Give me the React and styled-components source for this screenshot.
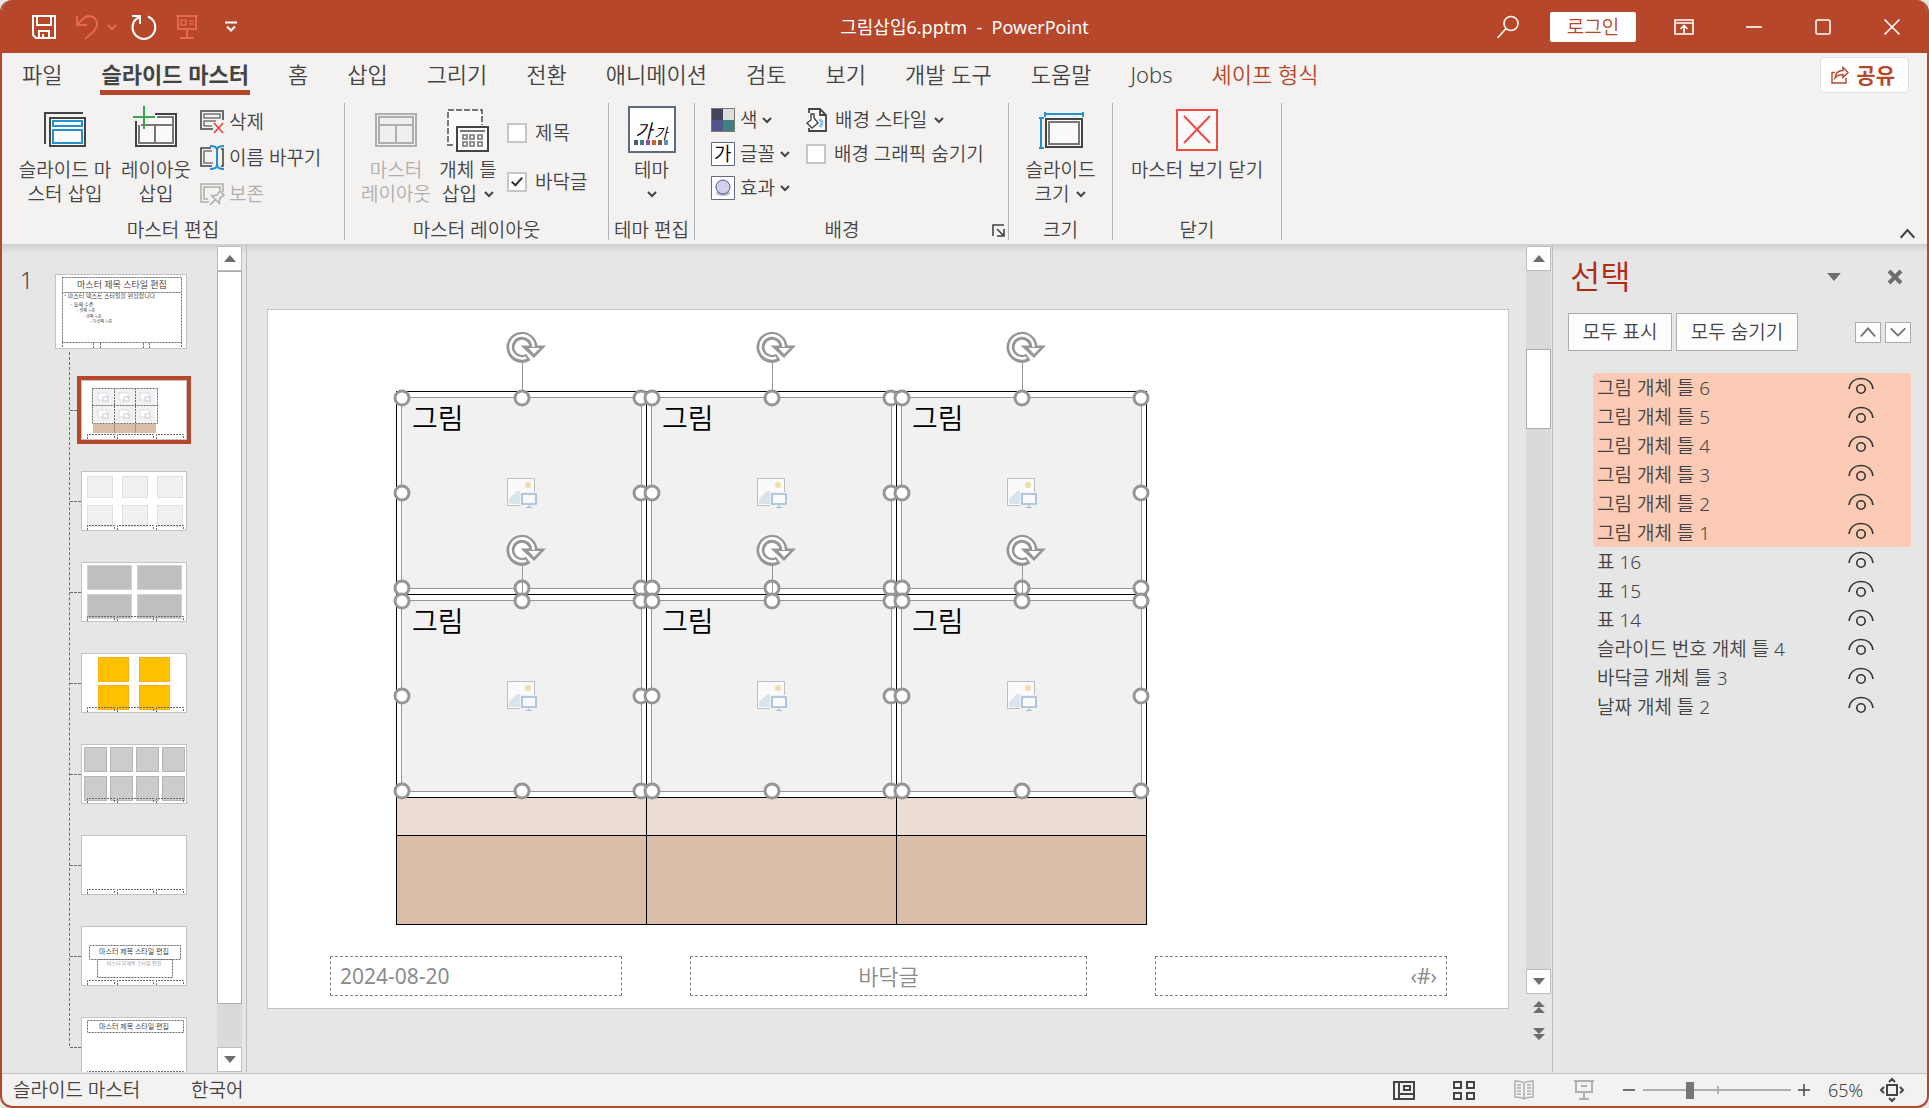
import React, { useState } from "react";
import styled, { createGlobalStyle } from "styled-components";

const GlobalStyle = createGlobalStyle`
    *, *::before, *::after {
        box-sizing: border-box;
    }
    body {
        margin: 0;
        background: #e4e6e8;
    }
    body, button, input {
        font-family: "Noto Sans", "Noto Sans CJK KR", sans-serif;
        font-weight: 350;
        color: #444444;
    }
    svg {
        display: block;
        flex: none;
        overflow: visible;
    }
`;

const Window = styled.div`
    display: flex;
    flex-direction: column;
    height: 100vh;
    overflow: hidden;
    background: #f3f2f1;
    border: 2px solid #b7472a;
    border-top: none;
    border-radius: 12px;
`;

const TitleBar = styled.header`
    display: grid;
    grid-template-columns: 1fr auto 1fr;
    align-items: center;
    flex: none;
    height: 53px;
    background: #b7472a;
    color: #ffffff;
`;

const QuickAccess = styled.div`
    display: flex;
    align-items: center;
    padding-left: 29px;
`;

const PlainButton = styled.button`
    display: flex;
    align-items: center;
    justify-content: center;
    flex: none;
    width: ${({ $width }) => $width || 24}px;
    height: ${({ $height }) => $height || 30}px;
    margin-right: ${({ $gap }) => $gap || 0}px;
    padding: 0;
    border: none;
    background: none;
    color: inherit;
    cursor: pointer;
`;

const WindowTitle = styled.h1`
    margin: 0;
    font-size: 18px;
    line-height: 24px;
    font-weight: 400;
    white-space: pre;
`;

const WindowControls = styled.div`
    display: flex;
    align-items: center;
    justify-content: flex-end;
`;

const LoginButton = styled.button`
    width: 86px;
    height: 30px;
    margin: 0 13px 0 27px;
    padding: 0;
    border: none;
    border-radius: 2px;
    background: #ffffff;
    color: #b7472a;
    font-size: 19px;
    line-height: 30px;
    cursor: pointer;
`;

const TabBar = styled.nav`
    display: flex;
    align-items: flex-start;
    flex: none;
    height: 45px;
    padding: 4px 18px 0 19px;
`;

const TabList = styled.div`
    display: flex;
    flex: 1;
    gap: 37px;
`;

const Tab = styled.button`
    height: 38px;
    padding: 1px 1px 0;
    border: none;
    border-bottom: 5px solid ${({ $active }) => ($active ? "#b7472a" : "transparent")};
    background: none;
    color: ${({ $accent }) => ($accent ? "#b7472a" : "#444444")};
    font-size: 22px;
    line-height: 32px;
    font-weight: ${({ $active }) => ($active ? 700 : 350)};
    white-space: nowrap;
    cursor: pointer;
`;

const ShareButton = styled.button`
    display: flex;
    align-items: center;
    gap: 7px;
    height: 36px;
    padding: 0 13px 0 10px;
    border: 1px solid #e1dfdd;
    border-radius: 4px;
    background: #ffffff;
    color: #b7472a;
    font-size: 21px;
    line-height: 32px;
    font-weight: 700;
    cursor: pointer;
`;

const Ribbon = styled.section`
    display: flex;
    flex: none;
    height: 146px;
    padding: 5px 0 4px;
`;

const Group = styled.section`
    display: flex;
    flex-direction: column;
    flex: none;
    width: ${({ $width }) => $width}px;
    border-right: 1px solid #b5b3b1;
`;

const GroupBody = styled.div`
    display: flex;
    flex: 1;
    min-height: 0;
    justify-content: ${({ $center }) => ($center ? "center" : "flex-start")};
    padding-left: ${({ $left }) => $left || 0}px;
`;

const GroupFooter = styled.div`
    display: flex;
    align-items: center;
    flex: none;
    height: 20px;
`;

const GroupName = styled.h2`
    flex: 1;
    margin: 0;
    font-size: 19px;
    line-height: 20px;
    font-weight: 350;
    text-align: center;
    white-space: nowrap;
`;

const BigButton = styled.button`
    display: flex;
    flex-direction: column;
    align-items: center;
    flex: none;
    width: ${({ $width }) => $width}px;
    padding: 0;
    border: none;
    background: none;
    color: ${({ disabled }) => (disabled ? "#b1afad" : "#444444")};
    font-size: 19px;
    line-height: 24px;
    white-space: nowrap;
    cursor: pointer;
    > svg {
        margin-bottom: 5px;
    }
`;

const Line = styled.span`
    display: flex;
    align-items: center;
    justify-content: center;
    gap: 7px;
    min-height: 24px;
`;

const Column = styled.div`
    display: flex;
    flex-direction: column;
    align-items: flex-start;
    padding-top: ${({ $top }) => $top || 0}px;
    margin-left: ${({ $left }) => $left || 0}px;
    gap: ${({ $gap }) => $gap || 0}px;
`;

const SmallButton = styled.button`
    display: flex;
    align-items: center;
    gap: ${({ $gap }) => $gap || 5}px;
    height: ${({ $height }) => $height || 34}px;
    padding: 0;
    border: none;
    background: none;
    color: ${({ disabled }) => (disabled ? "#b1afad" : "#444444")};
    font-size: 19px;
    line-height: 24px;
    white-space: nowrap;
    cursor: pointer;
`;

const CheckLabel = styled.label`
    display: flex;
    align-items: center;
    gap: 8px;
    height: ${({ $height }) => $height || 34}px;
    font-size: 19px;
    line-height: 24px;
    white-space: nowrap;
`;

const CheckBox = styled.input.attrs({ type: "checkbox" })`
    appearance: none;
    display: flex;
    justify-content: center;
    width: 20px;
    height: 20px;
    margin: 0;
    border: 2px solid #c6c6c6;
    background: #ffffff;
    &:checked::after {
        content: "";
        width: 6px;
        height: 11px;
        margin-top: 1px;
        border: solid #333333;
        border-width: 0 2px 2px 0;
        transform: rotate(42deg);
    }
`;

const RibbonEnd = styled.div`
    display: flex;
    flex: 1;
    align-items: flex-end;
    justify-content: flex-end;
    padding-right: 11px;
`;

const Workspace = styled.main`
    display: flex;
    flex: 1;
    min-height: 0;
    padding-bottom: 1px;
    background: linear-gradient(#cfcfcf, #e6e6e6 9px);
`;

const ThumbPane = styled.aside`
    display: flex;
    flex: none;
    width: 245px;
    padding-top: 2px;
    border-right: 1px solid #bcbcbc;
`;

const ThumbScroll = styled.div`
    display: flex;
    flex: 1;
    overflow: hidden;
    padding-top: 28px;
`;

const MasterNumber = styled.span`
    flex: none;
    width: 53px;
    padding-left: 18px;
    font-size: 23px;
    line-height: 12px;
`;

const Thumbs = styled.div`
    display: flex;
    flex-direction: column;
    flex: none;
`;

const ThumbButton = styled.button`
    flex: none;
    padding: 0;
    border: 1px solid #c3c3c3;
    background: #ffffff;
    outline: ${({ $selected }) => ($selected ? "4px solid #b7472a" : "none")};
    cursor: pointer;
`;

const LayoutThumbs = styled.div`
    display: flex;
    flex-direction: column;
    margin: 3px 0 0 14px;
    border-left: 1px dashed #6b6b6b;
    height: 694px;
    overflow: visible;
`;

const LayoutRow = styled.div`
    display: flex;
    align-items: center;
    flex: none;
    height: 60px;
    margin-top: ${({ $first }) => ($first ? 28 : 31)}px;
    &::before {
        content: "";
        width: 11px;
        border-top: 1px dashed #6b6b6b;
    }
`;

const ScrollBar = styled.div`
    display: flex;
    flex-direction: column;
    flex: none;
    width: 25px;
    margin-right: ${({ $gap }) => $gap || 0}px;
    background: #dadada;
`;

const ScrollButton = styled.button`
    display: flex;
    align-items: center;
    justify-content: center;
    flex: none;
    height: 25px;
    padding: 0;
    border: 1px solid #bcbcbc;
    background: #ffffff;
`;

const ScrollTrack = styled.div`
    flex: ${({ $grow }) => $grow};
`;

const ScrollThumb = styled.div`
    flex: ${({ $grow }) => $grow};
    border: 1px solid #ababab;
    background: #ffffff;
`;

const SlideJump = styled.div`
    display: flex;
    flex-direction: column;
    align-items: center;
    gap: 1px;
    flex: none;
    height: 78px;
    background: #e6e6e6;
`;

const Editor = styled.section`
    display: flex;
    flex: 1;
    min-width: 0;
    padding-top: 2px;
`;

const Stage = styled.div`
    display: flex;
    align-items: center;
    justify-content: center;
    flex: 1;
    min-width: 0;
    overflow: hidden;
    padding-left: 3px;
`;

const Slide = styled.div`
    flex: none;
    width: 1242px;
    height: 700px;
    padding: 81px 61px 0 62px;
    border: 1px solid #c3c3c3;
    background: #ffffff;
`;

const Board = styled.div`
    display: grid;
    grid-template-columns: repeat(3, 250px);
    grid-template-rows: 203px 203px 38px 89px;
    width: 751px;
    margin: 0 0 31px 66px;
    border-top: 1px solid #000000;
    border-left: 1px solid #000000;
`;

const BoardCell = styled.div`
    padding: 5px 4px;
    border-right: 1px solid #000000;
    border-bottom: 1px solid #000000;
    background: ${({ $fill }) => $fill || "#ffffff"};
`;

const Placeholder = styled.div`
    position: relative;
    display: flex;
    align-items: center;
    justify-content: center;
    height: 100%;
    border: 1px solid #969696;
    background: #f1f1f1;
`;

const PlaceholderName = styled.span`
    position: absolute;
    top: 4px;
    left: 10px;
    color: #000000;
    font-size: 28px;
    line-height: 32px;
`;

const Handle = styled.span`
    position: absolute;
    left: ${({ $x }) => $x}%;
    top: ${({ $y }) => $y}%;
    width: 17px;
    height: 17px;
    border: 3px solid #969696;
    border-radius: 50%;
    background: #ffffff;
    transform: translate(-50%, -50%);
`;

const Rotator = styled.span`
    position: absolute;
    left: 50%;
    bottom: 100%;
    width: 48px;
    height: 68px;
    margin-left: -24px;
`;

const FooterRow = styled.div`
    display: grid;
    grid-template-columns: 292px 397px 292px;
    justify-content: space-between;
`;

const FooterBox = styled.div`
    height: 40px;
    padding: 0 9px;
    border: 1px dashed #7f7f7f;
    color: #8b8b8b;
    font-size: ${({ $size }) => $size || 21}px;
    line-height: 38px;
    font-weight: ${({ $align }) => ($align === "center" ? 350 : 400)};
    text-align: ${({ $align }) => $align || "left"};
`;

const SelectionPane = styled.aside`
    flex: none;
    width: 375px;
    padding: 14px 16px 0 15px;
    border-left: 1px solid #bcbcbc;
`;

const PaneHeader = styled.div`
    display: flex;
    align-items: center;
    height: 38px;
    padding-left: 2px;
`;

const PaneTitle = styled.h2`
    flex: 1;
    margin: 0;
    color: #b02a15;
    font-size: 33px;
    line-height: 38px;
    font-weight: 350;
`;

const PaneTools = styled.div`
    display: flex;
    align-items: center;
    gap: 4px;
    margin: 17px 0 22px;
`;

const PaneButton = styled.button`
    height: 38px;
    width: ${({ $width }) => $width}px;
    padding: 0;
    border: 1px solid #ababab;
    background: #fdfdfd;
    font-size: 19px;
    line-height: 36px;
    white-space: nowrap;
    cursor: pointer;
`;

const OrderButton = styled.button`
    display: flex;
    align-items: center;
    justify-content: center;
    width: 26px;
    height: 21px;
    margin-left: ${({ $push }) => ($push ? "auto" : 0)};
    padding: 0;
    border: 1px solid #ababab;
    background: #fdfdfd;
`;

const ObjectList = styled.ul`
    margin: 0 0 0 25px;
    padding: 0;
    list-style: none;
`;

const ObjectRow = styled.li`
    display: flex;
    align-items: flex-start;
    justify-content: space-between;
    height: 29px;
    padding: 0 38px 0 4px;
    background: ${({ $selected }) => ($selected ? "#fbcbb5" : "transparent")};
    font-size: 19px;
    line-height: 31px;
`;

const StatusBar = styled.footer`
    display: flex;
    align-items: center;
    flex: none;
    height: 33px;
    padding: 0 14px 0 11px;
    border-top: 1px solid #c3c3c3;
    font-size: 19px;
    line-height: 32px;
`;

const StatusText = styled.span`
    width: ${({ $width }) => $width}px;
    white-space: nowrap;
`;

const ViewButtons = styled.div`
    display: flex;
    gap: 36px;
    margin-left: auto;
`;

const ZoomSlider = styled.input.attrs({ type: "range" })`
    appearance: none;
    width: 148px;
    height: 18px;
    margin: 0 6px 0 7px;
    background:
        linear-gradient(#b1afad, #b1afad) 74px center / 2px 8px no-repeat,
        linear-gradient(#b1afad, #b1afad) center / 100% 2px no-repeat;
    &::-webkit-slider-thumb {
        appearance: none;
        width: 8px;
        height: 17px;
        background: #777777;
    }
`;

const ZoomValue = styled.output`
    width: 60px;
    padding-left: 17px;
    font-size: 18px;
`;

const Chevron = ({ size = 10, up, color = "currentColor", weight = 2 }) => (
    <svg width={size} height={size} viewBox="0 0 10 10" fill="none" stroke={color} strokeWidth={weight}>
        <path d={up ? "M1 7.500 5 3l4 4.500" : "M1 3 5 7 9 3"} />
    </svg>
);

const Triangle = ({ up, width = 12, height = 7 }) => (
    <svg width={width} height={height} viewBox="0 0 12 7" fill="#6d6d6d">
        <path d={up ? "M0 7h12L6 0z" : "M0 0h12L6 7z"} />
    </svg>
);

const SaveIcon = () => (
    <svg width="26" height="26" viewBox="0 0 26 26" fill="none" stroke="#fff" strokeWidth="2">
        <path d="M2 2h22v22H5l-3-3z" />
        <path d="M6 2v9h14V2M8 24v-7h10v7M12 20v4" />
    </svg>
);

const UndoIcon = () => (
    <svg width="24" height="26" viewBox="0 0 24 26" fill="none" stroke="#e8694a" strokeWidth="2">
        <path d="M2 2v9h10M2 11 9 4c5-4 13-1 13 6 0 4-2 6-4 8l-8 7" />
    </svg>
);

const RedoIcon = () => (
    <svg width="26" height="26" viewBox="0 0 26 26" fill="none" stroke="#fff" strokeWidth="2">
        <path d="M1 2h8v8M8.500 3C4 5 1.500 9 1.500 13.500a11.300 11.300 0 0 0 22.800 0c0-5-3-9-7.300-11" />
    </svg>
);

const PresentIcon = () => (
    <svg width="24" height="26" viewBox="0 0 24 26" fill="none" stroke="#e8694a" strokeWidth="2">
        <path d="M1 2h22M3 2v13h18V2M12 15v9M5 24h14" />
        <path d="M6 6h5v5H6zM14 7h5M14 10h5" strokeWidth="1.500" />
    </svg>
);

const CustomizeIcon = () => (
    <svg width="12" height="12" viewBox="0 0 12 12" fill="none" stroke="#fff" strokeWidth="2">
        <path d="M0 1.500h12M2 5.500l4 4 4-4" />
    </svg>
);

const SearchIcon = () => (
    <svg width="24" height="24" viewBox="0 0 24 24" fill="none" stroke="#fff" strokeWidth="1.600">
        <circle cx="15" cy="8.500" r="7" />
        <path d="M10 13.500 1.500 23" />
    </svg>
);

const RibbonModeIcon = () => (
    <svg width="20" height="16" viewBox="0 0 20 16" fill="none" stroke="#fff" strokeWidth="1.600">
        <path d="M1 1h18v14H1zM1 4h18M10 14V7M6.500 10 10 6.500l3.500 3.500" />
    </svg>
);

const MinimizeIcon = () => (
    <svg width="16" height="16" viewBox="0 0 16 16" stroke="#fff" strokeWidth="1.600">
        <path d="M0 8h16" />
    </svg>
);

const MaximizeIcon = () => (
    <svg width="16" height="16" viewBox="0 0 16 16" fill="none" stroke="#fff" strokeWidth="1.600">
        <rect x="1" y="1" width="14" height="14" rx="1.500" />
    </svg>
);

const CloseIcon = () => (
    <svg width="16" height="16" viewBox="0 0 16 16" stroke="#fff" strokeWidth="1.600">
        <path d="M.5.5l15 15M15.500.5l-15 15" />
    </svg>
);

const ShareIcon = () => (
    <svg width="18" height="18" viewBox="0 0 18 18" fill="none" stroke="#b7472a" strokeWidth="1.400">
        <path d="M4 6.500H1V17h14v-5" />
        <path d="M4 12c.5-5 3-7.500 8-7.500V1.500L17 6.500l-5 5V8.500C8 8.500 6 9.500 4 12z" />
    </svg>
);

const InsertMasterIcon = () => (
    <svg width="46" height="50" viewBox="0 0 46 50" fill="none">
        <path d="M3 41V10h38" stroke="#444" strokeWidth="2" />
        <rect x="8" y="15" width="35" height="28" fill="#fafafa" stroke="#444" strokeWidth="2" />
        <path d="M11 18h29v5H11zM11 27h29v13H11z" stroke="#2490d0" strokeWidth="2" />
    </svg>
);

const InsertLayoutIcon = () => (
    <svg width="46" height="50" viewBox="0 0 46 50" fill="none">
        <path d="M4 22h12V12h27v31H4z" fill="#fafafa" />
        <path d="M3 18v25h40V11H22" stroke="#444" strokeWidth="2" />
        <path d="M24 14h16v26H6V22M8 22h32M22 22v18" stroke="#797774" strokeWidth="2" />
        <path d="M11 3v23M0 14h22" stroke="#3aa655" strokeWidth="2" />
    </svg>
);

const MasterLayoutIcon = () => (
    <svg width="46" height="50" viewBox="0 0 46 50" fill="none" stroke="#b1afad" strokeWidth="2">
        <rect x="3" y="11" width="40" height="32" fill="#f0efee" />
        <path d="M6 14h34v26H6zM6 22h34M23 22v18" />
    </svg>
);

const InsertPlaceholderIcon = () => (
    <svg width="46" height="50" viewBox="0 0 46 50" fill="none">
        <path d="M3 7h34v35H3z" fill="#fafafa" />
        <path d="M8 42H3V7h34v15" stroke="#797774" strokeWidth="2" strokeDasharray="6 2" />
        <rect x="12" y="24" width="31" height="24" fill="#fafafa" stroke="#444" strokeWidth="2" />
        <path d="M15 28h25" stroke="#797774" strokeWidth="2" />
        <path d="M18 32h4v4h-4zM25 32h4v4h-4zM33 32h4v4h-4zM18 39h4v4h-4zM25 39h4v4h-4zM33 39h4v4h-4z" stroke="#797774" strokeWidth="1.600" />
    </svg>
);

const DeleteIcon = () => (
    <svg width="24" height="24" viewBox="0 0 24 24" fill="none" stroke="#444" strokeWidth="1.600">
        <path d="M13 19H1V1h22v9" />
        <path d="M4 4h16v4H4zM4 16v-5h12M4 16h8" stroke="#797774" />
        <path d="m14 13 9 10M23 13l-9 10" stroke="#e8413c" />
    </svg>
);

const RenameIcon = () => (
    <svg width="24" height="26" viewBox="0 0 24 26" fill="none" stroke="#444" strokeWidth="1.600">
        <path d="M11 3H1v18h11M21 4h2v17h-2" />
        <path d="M12 6H4v12h9" stroke="#797774" />
        <path d="M10 1c5 0 7 1 7 4v15c0 3-2 4-7 4M24 1c-5 0-7 1-7 4v15c0 3 2 4 7 4" stroke="#2490d0" strokeWidth="2" />
    </svg>
);

const PreserveIcon = () => (
    <svg width="24" height="24" viewBox="0 0 24 24" fill="none" stroke="#b1afad" strokeWidth="1.600">
        <path d="M9 20H1V2h22v8M8 17H4V5h16v3" />
        <path d="m10 23 5-5M11 13l9 9M12 14l5-1 3-4 4 4-4 3-1 5" />
    </svg>
);

const ThemeIcon = () => (
    <svg width="48" height="50" viewBox="0 0 48 50">
        <rect x="1" y="4" width="46" height="45" fill="#fff" stroke="#5f6a82" strokeWidth="2" />
        <path d="M0 49h48" stroke="#5f6a82" strokeWidth="2" />
        <text x="7" y="35" fontSize="19" fill="#000" fontStyle="italic">가</text>
        <text x="26" y="36" fontSize="15" fill="#000" fontStyle="italic">가</text>
        {["#54548c", "#3f8183", "#a349a4", "#c8642a", "#8b5a3c", "#5b93b5"].map((color, i) => (
            <rect key={color} x={6 + i * 6} y="37" width="4" height="5" fill={color} />
        ))}
    </svg>
);

const ColorsIcon = () => (
    <svg width="24" height="24" viewBox="0 0 24 24">
        <path d="M0 0h12v12H0z" fill="#44445a" />
        <path d="M12 0h12v12H12z" fill="#dddddf" />
        <path d="M0 12h12v12H0z" fill="#54548c" />
        <path d="M12 12h12v12H12z" fill="#3f8183" />
        <path d="M.5.5h23v23H.5z" fill="none" stroke="#797774" />
    </svg>
);

const FontsIcon = () => (
    <svg width="24" height="24" viewBox="0 0 24 24">
        <path d="M.5.5h23v23H.5z" fill="#fff" stroke="#5f6a82" />
        <text x="3" y="19" fontSize="19" fill="#000">가</text>
    </svg>
);

const EffectsIcon = () => (
    <svg width="24" height="24" viewBox="0 0 24 24">
        <path d="M.5.5h23v23H.5z" fill="#fff" stroke="#5f6a82" />
        <ellipse cx="12" cy="17" rx="7" ry="3" fill="#bbbbc4" />
        <circle cx="12" cy="11" r="7" fill="#cfd0ea" stroke="#54548c" />
    </svg>
);

const BackgroundIcon = () => (
    <svg width="22" height="24" viewBox="0 0 22 24" fill="none" stroke="#444" strokeWidth="1.800">
        <path d="M3 5V1h11l6 6v16H3v-3" fill="#fafafa" />
        <path d="M14 1v6h6" />
        <path d="M13 12c3 0 4 3 1 7" stroke="#83c4ee" strokeWidth="3" />
        <path d="M5 6v6l-4 3 5 5 6-5-4-5V6z" fill="#fff" strokeWidth="1.400" />
    </svg>
);

const SlideSizeIcon = () => (
    <svg width="46" height="50" viewBox="0 0 46 50" fill="none">
        <rect x="8" y="16" width="36" height="28" fill="#fafafa" stroke="#444" strokeWidth="2" />
        <rect x="11" y="19" width="30" height="22" stroke="#797774" strokeWidth="2" />
        <path d="M7 11h38M7 9v5M45 9v5M3 15v30M1 15h5M1 45h5" stroke="#2490d0" strokeWidth="2" />
    </svg>
);

const CloseMasterIcon = () => (
    <svg width="46" height="50" viewBox="0 0 46 50" fill="none" stroke="#f04a45" strokeWidth="2">
        <rect x="3" y="7" width="40" height="40" fill="#fafafa" />
        <path d="m10 13 26 27M36 13 10 40" />
    </svg>
);

const LauncherIcon = () => (
    <svg width="13" height="13" viewBox="0 0 13 13" fill="none" stroke="#444" strokeWidth="1.600">
        <path d="M1 12V1h11M5 5l6 6M12 5v7H5" />
    </svg>
);

const EyeIcon = () => (
    <svg width="26" height="18" viewBox="0 0 26 18" fill="none" stroke="#333" strokeWidth="1.600">
        <path d="M1 11C2 4 7 .5 13 .5S24 4 25 11" />
        <circle cx="13" cy="11" r="4.200" />
    </svg>
);

const PictureIcon = () => (
    <svg width="30" height="30" viewBox="0 0 30 30" fill="none">
        <path d="M.5.5h27v27H.5z" fill="#fafafa" stroke="#bdbdbd" />
        <circle cx="21" cy="7" r="3" fill="#f1dcae" />
        <path d="M2 26v-5l8-8h3v13z" fill="#d8e4ee" />
        <path d="M13 14h17v16H13z" fill="#f1f1f1" />
        <path d="M15 16h14v10H15z" fill="#fafafa" stroke="#9dbbdb" strokeWidth="1.600" />
        <path d="M19 29.500h6M22 27v2" stroke="#9dbbdb" />
    </svg>
);

const RotateIcon = () => (
    <svg width="48" height="68" viewBox="0 0 48 68" fill="none">
        <path d="M24.500 32v28" stroke="#969696" />
        <circle cx="24" cy="17" r="13" fill="#fff" />
        <path d="M30.300 27A11.500 11.500 0 1 1 35.500 17" stroke="#969696" strokeWidth="8" />
        <path d="M22.500 15.500H48L36 28z" fill="#969696" />
        <path d="M28.300 27.600A11.500 11.500 0 1 1 35.500 17" stroke="#fff" strokeWidth="2.600" />
        <path d="M30.500 18H42l-6 6z" fill="#fff" />
    </svg>
);

const NormalViewIcon = () => (
    <svg width="24" height="20" viewBox="0 0 24 20" fill="none" stroke="#444" strokeWidth="2">
        <path d="M2 2h20v17H2zM7 2v17M7 14h15M12 6h6v4h-6z" />
    </svg>
);

const SorterIcon = () => (
    <svg width="24" height="20" viewBox="0 0 24 20" fill="none" stroke="#444" strokeWidth="2">
        <path d="M2 2h7v6H2zM15 2h7v6h-7zM2 13h7v6H2zM15 13h7v6h-7z" />
    </svg>
);

const ReadingIcon = () => (
    <svg width="24" height="20" viewBox="0 0 24 20" fill="none" stroke="#b1afad" strokeWidth="1.500">
        <path d="M12 3C9 1 6 1 3 1v16c3 0 6 0 9 2 3-2 6-2 9-2V1c-3 0-6 0-9 2zM12 3v16" />
        <path d="M5 5h4M5 8h4M5 11h4M5 14h4M15 5h4M15 8h4M15 11h4M15 14h4" />
    </svg>
);

const SlideShowIcon = () => (
    <svg width="24" height="22" viewBox="0 0 24 22" fill="none" stroke="#b1afad" strokeWidth="2">
        <path d="M2 2h20M4 2v11h16V2M12 13v7M7 20h10M9 7h6" />
    </svg>
);

const FitIcon = () => (
    <svg width="24" height="24" viewBox="0 0 24 24" fill="none" stroke="#444" strokeWidth="2">
        <path d="M7 7h10v10H7zM9 4l3-3 3 3M9 20l3 3 3-3M4 9l-3 3 3 3M20 9l3 3-3 3" />
    </svg>
);

const tabs = ["파일", "슬라이드 마스터", "홈", "삽입", "그리기", "전환", "애니메이션", "검토", "보기", "개발 도구", "도움말", "Jobs", "셰이프 형식"];

const objects = [
    { name: "그림 개체 틀 6", selected: true },
    { name: "그림 개체 틀 5", selected: true },
    { name: "그림 개체 틀 4", selected: true },
    { name: "그림 개체 틀 3", selected: true },
    { name: "그림 개체 틀 2", selected: true },
    { name: "그림 개체 틀 1", selected: true },
    { name: "표 16" },
    { name: "표 15" },
    { name: "표 14" },
    { name: "슬라이드 번호 개체 틀 4" },
    { name: "바닥글 개체 틀 3" },
    { name: "날짜 개체 틀 2" },
];

const handles = [[0, 0], [50, 0], [100, 0], [0, 50], [100, 50], [0, 100], [50, 100], [100, 100]];

const dashed = { fill: "none", stroke: "#6b6b6b", strokeWidth: 1, strokeDasharray: "2 1" };

const Boxes = ({ xs, ys, width, height, fill, stroke }) =>
    ys.flatMap((y) => xs.map((x) => (
        <rect key={`${x}-${y}`} x={x + 0.5} y={y + 0.5} width={width} height={height} fill={fill} stroke={stroke} />
    )));

// Each layout is drawn on a 104 x 58 sheet
const layouts = [
    {
        name: "그림 표",
        drawing: (
            <>
                <Boxes xs={[10, 31, 52]} ys={[7, 24]} width={21} height={17} fill="#f1f1f1" stroke="none" />
                <path d="M10.500 7.500h65v35h-65zM10.500 24.500h65M32.500 7v35M53.500 7v35" {...dashed} />
                {[16, 37, 58].flatMap((x) => [12, 29].map((y) => (
                    <g key={`${x}-${y}`}>
                        <rect x={x} y={y} width="9" height="7" fill="#fff" stroke="#ddd" />
                        <rect x={x + 5} y={y + 4} width="5" height="4" fill="#fff" stroke="#b9cfe6" />
                    </g>
                )))}
                <path d="M11 43h63v9H11z" fill="#d9bda9" />
                <path d="M32.500 43v9M53.500 43v9" stroke="#a88f7e" />
            </>
        ),
    },
    { name: "그림 6개", drawing: <Boxes xs={[5, 40, 75]} ys={[4, 33]} width={25} height={21} fill="#f1f1f1" stroke="#e0e0e0" /> },
    { name: "그림 4개", drawing: <Boxes xs={[5, 55]} ys={[2, 31]} width={44} height={24} fill="#bfbfbf" stroke="#d0d0d0" /> },
    { name: "노란 상자", drawing: <Boxes xs={[16, 57]} ys={[3, 31]} width={30} height={24} fill="#ffc000" stroke="#ffae1a" /> },
    { name: "그림 8개", drawing: <Boxes xs={[2, 28, 54, 80]} ys={[2, 31]} width={22} height={24} fill="#cccccc" stroke="#b5b5b5" /> },
    { name: "빈 화면", drawing: null },
    {
        name: "제목 슬라이드",
        drawing: (
            <>
                <path d="M7.500 18.500h91v14h-91zM15.500 32.500h75v18h-75z" {...dashed} />
                <text x="52" y="27" fontSize="7" textAnchor="middle" fill="#333">마스터 제목 스타일 편집</text>
                <text x="52" y="38" fontSize="5" textAnchor="middle" fill="#8b8b8b">마스터 부제목 스타일 편집</text>
            </>
        ),
    },
    {
        name: "제목만",
        drawing: (
            <>
                <path d="M5.500 2.500h96v12h-96z" {...dashed} />
                <text x="52" y="11" fontSize="7" textAnchor="middle" fill="#333">마스터 제목 스타일 편집</text>
            </>
        ),
    },
];

const MasterThumb = () => (
    <svg width="130" height="73" viewBox="0 0 130 73">
        <path d="M6.500 2.500h119v15h-119zM6.500 17.500v50h119v-50M6.500 67v6M37.500 73v-5M44.500 73v-5M87.500 73v-5M93.500 73v-5M125.500 67v6" {...dashed} />
        <text x="66" y="13" fontSize="9" textAnchor="middle" fill="#333">마스터 제목 스타일 편집</text>
        <g fill="#333">
            <text x="8" y="23" fontSize="6">• 마스터 텍스트 스타일을 편집합니다</text>
            <text x="14" y="31" fontSize="5">– 둘째 수준</text>
            <text x="21" y="37" fontSize="4">• 셋째 수준</text>
            <text x="27" y="43" fontSize="4">– 넷째 수준</text>
            <text x="34" y="48" fontSize="4">» 다섯째 수준</text>
        </g>
    </svg>
);

const LayoutThumb = ({ drawing }) => (
    <svg width="104" height="58" viewBox="0 0 104 58">
        {drawing}
        <path d="M5.500 58v-4.500h27V58M35.500 58v-4.500h36V58M74.500 58v-4.500h27V58" {...dashed} />
    </svg>
);

const PicturePlaceholder = () => (
    <Placeholder>
        <PlaceholderName>그림</PlaceholderName>
        <PictureIcon />
        {handles.map(([x, y]) => <Handle key={`${x}-${y}`} $x={x} $y={y} />)}
        <Rotator><RotateIcon /></Rotator>
    </Placeholder>
);

export default function App() {
    const [activeTab, setActiveTab] = useState(1);
    const [activeLayout, setActiveLayout] = useState(0);
    const [zoom, setZoom] = useState(65);

    return (
        <>
            <GlobalStyle />
            <Window>
                <TitleBar>
                    <QuickAccess>
                        <PlainButton $width={26} $gap={18} aria-label="저장"><SaveIcon /></PlainButton>
                        <PlainButton $gap={8} aria-label="실행 취소"><UndoIcon /></PlainButton>
                        <PlainButton $width={10} $gap={14} aria-label="실행 취소 목록"><Chevron color="#e8694a" /></PlainButton>
                        <PlainButton $width={26} $gap={18} aria-label="다시 실행"><RedoIcon /></PlainButton>
                        <PlainButton $gap={20} aria-label="처음부터"><PresentIcon /></PlainButton>
                        <PlainButton aria-label="빠른 실행 도구 모음 사용자 지정"><CustomizeIcon /></PlainButton>
                    </QuickAccess>
                    <WindowTitle>그림삽입6.pptm  -  PowerPoint</WindowTitle>
                    <WindowControls>
                        <PlainButton $width={30} aria-label="검색"><SearchIcon /></PlainButton>
                        <LoginButton>로그인</LoginButton>
                        <PlainButton $width={70} aria-label="리본 메뉴 표시 옵션"><RibbonModeIcon /></PlainButton>
                        <PlainButton $width={70} aria-label="최소화"><MinimizeIcon /></PlainButton>
                        <PlainButton $width={68} aria-label="최대화"><MaximizeIcon /></PlainButton>
                        <PlainButton $width={70} aria-label="닫기"><CloseIcon /></PlainButton>
                    </WindowControls>
                </TitleBar>

                <TabBar>
                    <TabList>
                        {tabs.map((tab, index) => (
                            <Tab
                                key={tab}
                                $active={index === activeTab}
                                $accent={index === tabs.length - 1}
                                onClick={() => setActiveTab(index)}
                            >
                                {tab}
                            </Tab>
                        ))}
                    </TabList>
                    <ShareButton><ShareIcon />공유</ShareButton>
                </TabBar>

                <Ribbon>
                    <Group $width={343}>
                        <GroupBody $left={12}>
                            <BigButton $width={102}>
                                <InsertMasterIcon />
                                <Line>슬라이드 마</Line>
                                <Line>스터 삽입</Line>
                            </BigButton>
                            <BigButton $width={80}>
                                <InsertLayoutIcon />
                                <Line>레이아웃</Line>
                                <Line>삽입</Line>
                            </BigButton>
                            <Column $top={1} $left={4}>
                                <SmallButton $height={36}><DeleteIcon />삭제</SmallButton>
                                <SmallButton $height={36}><RenameIcon />이름 바꾸기</SmallButton>
                                <SmallButton $height={36} disabled><PreserveIcon />보존</SmallButton>
                            </Column>
                        </GroupBody>
                        <GroupFooter><GroupName>마스터 편집</GroupName></GroupFooter>
                    </Group>
                    <Group $width={264}>
                        <GroupBody $left={13}>
                            <BigButton $width={76} disabled>
                                <MasterLayoutIcon />
                                <Line>마스터</Line>
                                <Line>레이아웃</Line>
                            </BigButton>
                            <BigButton $width={68}>
                                <InsertPlaceholderIcon />
                                <Line>개체 틀</Line>
                                <Line>삽입<Chevron /></Line>
                            </BigButton>
                            <Column $top={13} $left={5} $gap={15}>
                                <CheckLabel><CheckBox />제목</CheckLabel>
                                <CheckLabel><CheckBox defaultChecked />바닥글</CheckLabel>
                            </Column>
                        </GroupBody>
                        <GroupFooter><GroupName>마스터 레이아웃</GroupName></GroupFooter>
                    </Group>
                    <Group $width={86}>
                        <GroupBody $center>
                            <BigButton $width={80}>
                                <ThemeIcon />
                                <Line>테마</Line>
                                <Line><Chevron /></Line>
                            </BigButton>
                        </GroupBody>
                        <GroupFooter><GroupName>테마 편집</GroupName></GroupFooter>
                    </Group>
                    <Group $width={314}>
                        <GroupBody $left={16}>
                            <Column>
                                <SmallButton><ColorsIcon />색<Chevron /></SmallButton>
                                <SmallButton><FontsIcon />글꼴<Chevron /></SmallButton>
                                <SmallButton><EffectsIcon />효과<Chevron /></SmallButton>
                            </Column>
                            <Column $left={16}>
                                <SmallButton $gap={7}><BackgroundIcon />배경 스타일<Chevron /></SmallButton>
                                <CheckLabel><CheckBox />배경 그래픽 숨기기</CheckLabel>
                            </Column>
                        </GroupBody>
                        <GroupFooter>
                            <GroupName>배경</GroupName>
                            <PlainButton $width={18} $gap={1} $height={20} aria-label="배경 서식"><LauncherIcon /></PlainButton>
                        </GroupFooter>
                    </Group>
                    <Group $width={104}>
                        <GroupBody $center>
                            <BigButton $width={90}>
                                <SlideSizeIcon />
                                <Line>슬라이드</Line>
                                <Line>크기<Chevron /></Line>
                            </BigButton>
                        </GroupBody>
                        <GroupFooter><GroupName>크기</GroupName></GroupFooter>
                    </Group>
                    <Group $width={169}>
                        <GroupBody $center>
                            <BigButton $width={150}>
                                <CloseMasterIcon />
                                <Line>마스터 보기 닫기</Line>
                            </BigButton>
                        </GroupBody>
                        <GroupFooter><GroupName>닫기</GroupName></GroupFooter>
                    </Group>
                    <RibbonEnd>
                        <PlainButton $width={18} $height={14} aria-label="리본 메뉴 축소"><Chevron up size={17} weight={1.2} /></PlainButton>
                    </RibbonEnd>
                </Ribbon>

                <Workspace>
                    <ThumbPane>
                        <ThumbScroll>
                            <MasterNumber>1</MasterNumber>
                            <Thumbs>
                                <ThumbButton aria-label="슬라이드 마스터 1"><MasterThumb /></ThumbButton>
                                <LayoutThumbs>
                                    {layouts.map(({ name, drawing }, index) => (
                                        <LayoutRow key={name} $first={index === 0}>
                                            <ThumbButton
                                                aria-label={name}
                                                $selected={index === activeLayout}
                                                onClick={() => setActiveLayout(index)}
                                            >
                                                <LayoutThumb drawing={drawing} />
                                            </ThumbButton>
                                        </LayoutRow>
                                    ))}
                                </LayoutThumbs>
                            </Thumbs>
                        </ThumbScroll>
                        <ScrollBar $gap={4}>
                            <ScrollButton aria-label="위로"><Triangle up /></ScrollButton>
                            <ScrollThumb $grow={733} />
                            <ScrollTrack $grow={43} />
                            <ScrollButton aria-label="아래로"><Triangle /></ScrollButton>
                        </ScrollBar>
                    </ThumbPane>

                    <Editor>
                        <Stage>
                            <Slide>
                                <Board>
                                    {[1, 2, 3, 4, 5, 6].map((n) => (
                                        <BoardCell key={n}><PicturePlaceholder /></BoardCell>
                                    ))}
                                    {[1, 2, 3].map((n) => <BoardCell key={n} $fill="#ebddd4" />)}
                                    {[1, 2, 3].map((n) => <BoardCell key={n} $fill="#d9bda9" />)}
                                </Board>
                                <FooterRow>
                                    <FooterBox>2024-08-20</FooterBox>
                                    <FooterBox $align="center" $size={22}>바닥글</FooterBox>
                                    <FooterBox $align="right">‹#›</FooterBox>
                                </FooterRow>
                            </Slide>
                        </Stage>
                        <ScrollBar $gap={1}>
                            <ScrollButton aria-label="위로"><Triangle up /></ScrollButton>
                            <ScrollTrack $grow={78} />
                            <ScrollThumb $grow={78} />
                            <ScrollTrack $grow={542} />
                            <ScrollButton aria-label="아래로"><Triangle /></ScrollButton>
                            <SlideJump>
                                <PlainButton $height={26} aria-label="이전 슬라이드">
                                    <svg width="12" height="12" viewBox="0 0 12 12" fill="#6d6d6d"><path d="M0 6h12L6 0zM0 12h12L6 6z" /></svg>
                                </PlainButton>
                                <PlainButton $height={26} aria-label="다음 슬라이드">
                                    <svg width="12" height="12" viewBox="0 0 12 12" fill="#6d6d6d"><path d="M0 0h12L6 6zM0 6h12l-6 6z" /></svg>
                                </PlainButton>
                            </SlideJump>
                        </ScrollBar>
                    </Editor>

                    <SelectionPane>
                        <PaneHeader>
                            <PaneTitle>선택</PaneTitle>
                            <PlainButton $gap={37} aria-label="작업창 옵션"><Triangle width={14} height={8} /></PlainButton>
                            <PlainButton $gap={4} aria-label="작업창 닫기">
                                <svg width="16" height="16" viewBox="0 0 16 16" stroke="#6d6d6d" strokeWidth="4"><path d="m2 2 12 12M14 2 2 14" /></svg>
                            </PlainButton>
                        </PaneHeader>
                        <PaneTools>
                            <PaneButton $width={104}>모두 표시</PaneButton>
                            <PaneButton $width={122}>모두 숨기기</PaneButton>
                            <OrderButton $push aria-label="앞으로 가져오기"><Chevron up size={18} weight={1} color="#6d6d6d" /></OrderButton>
                            <OrderButton aria-label="뒤로 보내기"><Chevron size={18} weight={1} color="#6d6d6d" /></OrderButton>
                        </PaneTools>
                        <ObjectList>
                            {objects.map(({ name, selected }) => (
                                <ObjectRow key={name} $selected={selected}>
                                    {name}
                                    <PlainButton $height={28} aria-label={`${name} 표시`}><EyeIcon /></PlainButton>
                                </ObjectRow>
                            ))}
                        </ObjectList>
                    </SelectionPane>
                </Workspace>

                <StatusBar>
                    <StatusText $width={178}>슬라이드 마스터</StatusText>
                    <StatusText>한국어</StatusText>
                    <ViewButtons>
                        <PlainButton aria-label="기본"><NormalViewIcon /></PlainButton>
                        <PlainButton aria-label="여러 슬라이드"><SorterIcon /></PlainButton>
                        <PlainButton aria-label="읽기용 보기"><ReadingIcon /></PlainButton>
                        <PlainButton $gap={26} aria-label="슬라이드 쇼"><SlideShowIcon /></PlainButton>
                    </ViewButtons>
                    <PlainButton $width={14} aria-label="축소">
                        <svg width="12" height="12" viewBox="0 0 12 12" stroke="#444" strokeWidth="1.500"><path d="M0 6h12" /></svg>
                    </PlainButton>
                    <ZoomSlider aria-label="확대/축소" min="10" max="190" value={zoom} onChange={(e) => setZoom(e.target.value)} />
                    <PlainButton $width={14} aria-label="확대">
                        <svg width="12" height="12" viewBox="0 0 12 12" stroke="#444" strokeWidth="1.500"><path d="M0 6h12M6 0v12" /></svg>
                    </PlainButton>
                    <ZoomValue>{zoom}%</ZoomValue>
                    <PlainButton $width={42} aria-label="창에 맞춤"><FitIcon /></PlainButton>
                </StatusBar>
            </Window>
        </>
    );
}
